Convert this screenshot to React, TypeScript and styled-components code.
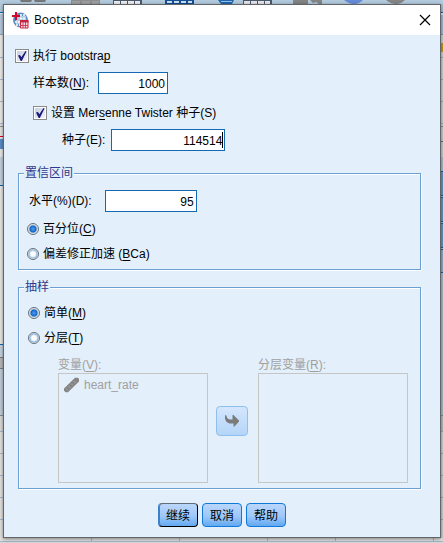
import React, { useState } from "react";
import styled, { createGlobalStyle } from "styled-components";

const uiFont = '"Liberation Sans", Arial, "Noto Sans CJK SC", sans-serif';

const GlobalStyle = createGlobalStyle`
  *, *::before, *::after { box-sizing: border-box; }
  body { margin: 0; background: #ecebe9; font: 12px/16px ${uiFont}; color: #000; }
  input, button { font: inherit; color: inherit; }
`;

/* ---------- window behind the dialog ---------- */

const Desktop = styled.div`
  display: grid;
  grid-template-columns: 3px minmax(0, 1fr) 2px;
  grid-template-rows: 4px auto 5px;
  min-height: 100vh;
  overflow: hidden;
`;

const Toolbar = styled.div`
  grid-column: 1 / -1;
  background: #b4cbdf;
  svg { display: block; }
`;

const Strip = styled.div`
  display: flex;
  flex-direction: column;
`;

const Segment = styled.div<{ $size: number; $fill: string; $line?: string }>`
  flex: none;
  height: ${(p) => p.$size}px;
  background: ${(p) => p.$fill};
  border-top: ${(p) => (p.$line ? `1px solid ${p.$line}` : "none")};
`;

const SheetRow = styled.div`
  grid-column: 1 / -1;
  display: flex;
  background: #e3e2e1;
  border-bottom: 1px solid #d8d8d8;
  box-shadow: inset 0 -1px 0 #a5b8cc;
`;

const SheetCell = styled.div<{ $width: number }>`
  flex: none;
  width: ${(p) => p.$width}px;
  border-right: 1px solid #a5b8cc;
`;

type Seg = [number, string, string?];

const leftSegments: Seg[] = [
  [8, "#b4cbdf"],
  [2, "#e6eef5", "#1262ab"],
  [20, "#b9cade"],
  [23, "#ecebe8", "#8fa5bd"],
  [22, "#ecebe8", "#a9bccf"],
  [22, "#ecebe8", "#a9bccf"],
  [22, "#ecebe8", "#a9bccf"],
  [3, "#e5e5e2", "#a9bccf"],
  [10, "#e5e5e2", "#8e8e8a"],
  [3, "#e4e8ee", "#d80027"],
  [10, "#5a8dc4"],
  [8, "#e9e9e7"],
  [28, "#c5d2df"],
  [159, "#e9e8e5", "#0e66b5"],
  [13, "#c7d5e2", "#0e66b5"],
  [11, "#b9b9ba", "#7d7d7d"],
  [47, "#c3cedb", "#7d7d7d"],
  [16, "#dddcda", "#8c8c8c"],
  [22, "#e3e2e0", "#a5b8cc"],
  [22, "#e3e2e0", "#a5b8cc"],
  [22, "#e3e2e0", "#a5b8cc"],
  [22, "#e3e2e0", "#a5b8cc"],
  [19, "#e3e2e0", "#a5b8cc"],
];

const rightSegments: Seg[] = [
  [8, "#a9bed2"],
  [3, "#dde5ec", "#1262ab"],
  [19, "#a8b8cf"],
  [9, "#cfcecd", "#8294aa"],
  [9, "#c39a1c"],
  [5, "#cfcecd"],
  [22, "#cfcecd", "#94a9c0"],
  [22, "#cfcecd", "#94a9c0"],
  [22, "#cfcecd", "#94a9c0"],
  [3, "#cfcecd", "#94a9c0"],
  [15, "#c9c9c8", "#888888"],
  [16, "#c9c9c8", "#6d6d6d"],
  [14, "#b0b9c8"],
  [24, "#6796c8", "#0e5ea8"],
  [2, "#b0b9c8", "#0e5ea8"],
  [24, "#6796c8", "#0e5ea8"],
  [2, "#b0b9c8", "#0e5ea8"],
  [24, "#6796c8", "#0e5ea8"],
  [2, "#b0b9c8", "#0e5ea8"],
  [23, "#91a9c8", "#0e5ea8"],
  [143, "#afb8c6", "#0e5ea8"],
  [16, "#bbbab9", "#888888"],
  [22, "#cfcecd", "#94a9c0"],
  [22, "#cfcecd", "#94a9c0"],
  [22, "#cfcecd", "#94a9c0"],
  [22, "#cfcecd", "#94a9c0"],
  [19, "#cfcecd", "#94a9c0"],
];

const Edge = ({ segments }: { segments: Seg[] }) => (
  <Strip aria-hidden="true">
    {segments.map(([size, fill, line], i) => (
      <Segment key={i} $size={size} $fill={fill} $line={line} />
    ))}
  </Strip>
);

const ToolbarIcons = () => (
  <svg width="443" height="4" viewBox="0 0 443 4" aria-hidden="true">
    <path d="M20 0h12l-1 2h-10zM34 0h12l-1 2h-10z" fill="#777" />
    <path d="M71 0h29v4H71z" fill="#8d8e90" />
    <path d="M72 1h8v3h-8zM82 1h8v3h-8zM92 1h7v3h-7z" fill="#a2a2a2" />
    <path d="M113 0h29v4h-29z" fill="#4b596d" />
    <path d="M114 1h6v3h-6zM121 1h6v3h-6zM128 1h6v3h-6zM135 1h5v3h-5z" fill="#f1f1f3" />
    <path d="M165 0h29v4h-29z" fill="#154e93" />
    <path d="M167 1h5v2h-5zM174 1h5v2h-5zM181 1h5v2h-5zM188 1h4v2h-4z" fill="#cfe3f7" />
    <path d="M218 0h16l-2 4h-11z" fill="#2465ab" />
    <path d="M221 1h11v1h-11z" fill="#8bc5f0" />
    <path d="M243 0h29v4h-29z" fill="#4b596d" />
    <path d="M244 1h6v3h-6zM251 1h6v3h-6zM258 1h6v3h-6zM265 1h5v3h-5z" fill="#e8e8ee" />
    <path d="M293 0h15v4h-15zM310 0h12v4h-3l-3-2-3 1z" fill="#858585" />
    <path d="M344 0h19q-4 4-9 4t-10-4z" fill="#668bd9" />
    <path d="M386 0h19q-4 4-9 4t-10-4z" fill="#858585" />
  </svg>
);

/* ---------- dialog ---------- */

const Dialog = styled.section`
  display: flex;
  flex-direction: column;
  background: #e3effb;
  border: 1px solid #5f6568;
  box-shadow: 0 1px 4px rgba(0, 0, 0, 0.45);
  z-index: 1;
`;

const TitleBar = styled.header`
  display: flex;
  align-items: center;
  gap: 5px;
  height: 30px;
  padding: 0 8px;
  background: #fff;
`;

const Title = styled.h1`
  flex: 1;
  margin: 0;
  font: 12px/16px "Open Sans", "Noto Sans", sans-serif;
`;

const CloseButton = styled.button`
  display: grid;
  place-items: center;
  width: 14px;
  height: 14px;
  padding: 0;
  border: 0;
  background: none;
`;

const Body = styled.form`
  display: flex;
  flex-direction: column;
  flex: 1;
  padding: 12px 19px 10px 11px;
`;

const Settings = styled.div`
  display: flex;
  flex-direction: column;
  align-items: flex-start;
  padding-bottom: 10px;
`;

const Row = styled.div<{ $indent?: number; $height?: number; $gap?: number }>`
  display: flex;
  align-items: center;
  gap: ${(p) => p.$gap ?? 9}px;
  height: ${(p) => p.$height ?? 22}px;
  margin-left: ${(p) => p.$indent ?? 0}px;
`;

const OptionLabel = styled.label`
  display: flex;
  align-items: center;
  gap: 4px;
  white-space: pre;
`;

const FieldLabel = styled.label`
  white-space: pre;
`;

const Key = styled.span`
  text-decoration: underline;
  text-underline-offset: 2px;
  text-decoration-thickness: 1px;
`;

const TickFrame = styled.span`
  display: grid;
  width: 14px;
  height: 14px;
  > * { grid-area: 1 / 1; }
  svg { pointer-events: none; }
`;

const Tick = styled.input`
  appearance: none;
  width: 14px;
  height: 14px;
  margin: 0;
  border: 1px solid #8b8b8b;
  background: linear-gradient(135deg, #c3cbdc, #f6f7fa);
  box-shadow: inset 0 0 0 1px #fff;
  &:not(:checked) + svg { visibility: hidden; }
`;

const Radio = styled.input`
  appearance: none;
  width: 12px;
  height: 12px;
  margin: 0;
  border: 1px solid #64707a;
  border-radius: 50%;
  background: radial-gradient(circle, #fff 0 2px, #dbeafa 3px, #8fb4d8 4px, #e8eef2 5px);
  &:checked {
    background: radial-gradient(circle, #4090e8 0 1px, #1264c4 3px, #b9cad8 4px, #eef1f2 5px);
  }
`;

const FieldBox = styled.span<{ $width: number; $caret?: boolean }>`
  position: relative;
  display: flex;
  width: ${(p) => p.$width}px;
  &::after {
    content: "";
    display: ${(p) => (p.$caret ? "block" : "none")};
    position: absolute;
    top: 3px;
    right: 2px;
    width: 1px;
    height: 16px;
    background: #000;
  }
`;

const Field = styled.input`
  width: 100%;
  height: 22px;
  padding: 2px 2px 0 2px;
  border: 1px solid #1768b3;
  border-radius: 0;
  outline: 0;
  background: #fff;
  text-align: right;
`;

const Group = styled.fieldset<{ $bottom: number }>`
  min-width: 0;
  margin: 0 0 9px 3px;
  padding: 3px 12px ${(p) => p.$bottom}px 5px;
  border: 1px solid #6ca0d2;
  box-shadow: 1px 1px 0 #fff, inset 1px 1px 0 #fff;
`;

const Legend = styled.legend`
  padding: 0 1px;
  background: #e3effb;
  color: #2d3a8f;
`;

const Transfer = styled.div`
  display: grid;
  grid-template-columns: minmax(0, 1fr) 34px minmax(0, 1fr);
  column-gap: 8px;
  margin-left: 34px;
  padding-top: 9px;
  color: #a0a0a0;
`;

const ListColumn = styled.div`
  display: flex;
  flex-direction: column;
`;

const List = styled.ul`
  height: 110px;
  margin: 0;
  padding: 2px 4px;
  border: 1px solid #c6c6c6;
  list-style: none;
`;

const ListItem = styled.li`
  display: flex;
  align-items: center;
  gap: 4px;
  height: 18px;
`;

const MoveButton = styled.button`
  align-self: end;
  display: grid;
  place-items: center;
  width: 32px;
  height: 30px;
  margin-bottom: 47px;
  padding: 0;
  border: 1px solid #8dc0ef;
  border-radius: 4px;
  background: linear-gradient(#d4e6fd, #b4d5f8);
`;

const Actions = styled.footer`
  display: flex;
  justify-content: center;
  gap: 4px;
  padding: 5px 0 0 8px;
`;

const ActionButton = styled.button<{ $primary?: boolean }>`
  width: 40px;
  height: 24px;
  padding: 2px 0 0;
  border: 1px solid #0f78d8;
  border-color: ${(p) => (p.$primary ? "#626c7b #000 #000 #3c7fc6" : "#0f78d8")};
  border-radius: 4px;
  background: linear-gradient(#bbd6fb, #9dc8fa 55%, #62a9f1);
  box-shadow: ${(p) => (p.$primary ? "inset 1px 0 0 #6c7684" : "none")};
  line-height: 20px;
`;

const AppIcon = () => (
  <svg width="17" height="17" viewBox="0 0 17 17" aria-hidden="true">
    <circle cx="8.5" cy="8" r="7.5" fill="#5f91c2" />
    <path d="M4 4h10v8H4z" fill="#b4cde4" />
    <path d="M8 3h5M8 6.500h6M3 10h5M4 13h4" stroke="#fff" strokeWidth="1.5" strokeDasharray="2 1" />
    <path d="M4 0v8M0 4h8" stroke="#d3072d" strokeWidth="2" />
    <path d="M8.500 8.500h7.500v7.500H8.500z" fill="#f7dde2" stroke="#c82442" />
    <path d="M8 8h8.500v2.500H8z" fill="#c82442" />
    <path d="M8 13.500h8M11 10v6M13.500 10v6" stroke="#cf3f5a" />
  </svg>
);

const CheckMark = () => (
  <svg width="14" height="14" viewBox="0 0 14 14" aria-hidden="true">
    <path d="M3 6.500l2-.5 1.300 2.300L10.500 2l1 .6L6.800 12H5.700z" fill="#17177f" />
  </svg>
);

const RulerIcon = () => (
  <svg width="17" height="16" viewBox="0 0 17 16" aria-hidden="true">
    <path d="M1 11.500L12 .8h3l1 1.200v2.500L5 15.200H2.500L1 13.500z" fill="#858585" />
    <path d="M3 11.500l2 2M5.500 9l2 2M8 6.500l2 2M10.500 4l2 2" stroke="#a9a9a9" strokeWidth="1" />
  </svg>
);

const ArrowIcon = () => (
  <svg width="16" height="14" viewBox="0 0 16 14" aria-hidden="true">
    <path d="M1 1.500l1-.5 1.500 3.500L6 5.500h2.500V1h1L15 6.500v1L10.500 12.500h-1V9.500H5.500L2.500 8 1 5z" fill="#7b7b7b" />
  </svg>
);

const CheckOption = ({ children }: { children: React.ReactNode }) => (
  <OptionLabel>
    <TickFrame>
      <Tick type="checkbox" defaultChecked />
      <CheckMark />
    </TickFrame>
    <span>{children}</span>
  </OptionLabel>
);

interface RadioProps {
  name: string;
  checked: boolean;
  onSelect: () => void;
  children: React.ReactNode;
}

const RadioOption = ({ name, checked, onSelect, children }: RadioProps) => (
  <OptionLabel>
    <Radio type="radio" name={name} checked={checked} onChange={onSelect} />
    <span>{children}</span>
  </OptionLabel>
);

export default function App() {
  const [interval, setInterval] = useState("percentile");
  const [sampling, setSampling] = useState("simple");

  return (
    <>
      <GlobalStyle />
      <Desktop>
        <Toolbar>
          <ToolbarIcons />
        </Toolbar>
        <Edge segments={leftSegments} />
        <Dialog role="dialog" aria-labelledby="dialog-title">
          <TitleBar>
            <AppIcon />
            <Title id="dialog-title">Bootstrap</Title>
            <CloseButton type="button" aria-label="关闭">
              <svg width="12" height="12" viewBox="0 0 12 12" aria-hidden="true">
                <path d="M1 1l10 10M11 1L1 11" stroke="#000" strokeWidth="1.2" />
              </svg>
            </CloseButton>
          </TitleBar>
          <Body onSubmit={(e) => e.preventDefault()}>
            <Settings>
              <Row $height={18}>
                <CheckOption>
                  执行 bootstra<Key>p</Key>
                </CheckOption>
              </Row>
              <Row $height={36} $indent={18}>
                <FieldLabel htmlFor="samples">
                  样本数(<Key>N</Key>):
                </FieldLabel>
                <FieldBox $width={70}>
                  <Field id="samples" defaultValue="1000" />
                </FieldBox>
              </Row>
              <Row $height={24} $indent={18}>
                <CheckOption>
                  设置 Mer<Key>s</Key>enne Twister 种子(S)
                </CheckOption>
              </Row>
              <Row $height={30} $indent={47} $gap={6}>
                <FieldLabel htmlFor="seed">种子(E):</FieldLabel>
                <FieldBox $width={114} $caret>
                  <Field id="seed" defaultValue="114514" />
                </FieldBox>
              </Row>
            </Settings>

            <Group $bottom={1}>
              <Legend>置信区间</Legend>
              <Row $height={34} $indent={5} $gap={13}>
                <FieldLabel htmlFor="level">水平(%)(D):</FieldLabel>
                <FieldBox $width={92}>
                  <Field id="level" defaultValue="95" />
                </FieldBox>
              </Row>
              <Row $height={22} $indent={3}>
                <RadioOption
                  name="interval"
                  checked={interval === "percentile"}
                  onSelect={() => setInterval("percentile")}
                >
                  百分位(<Key>C</Key>)
                </RadioOption>
              </Row>
              <Row $height={28} $indent={3}>
                <RadioOption
                  name="interval"
                  checked={interval === "bca"}
                  onSelect={() => setInterval("bca")}
                >
                  偏差修正加速 (<Key>B</Key>Ca)
                </RadioOption>
              </Row>
            </Group>

            <Group $bottom={5}>
              <Legend>抽样</Legend>
              <Row $height={30} $indent={4}>
                <RadioOption
                  name="sampling"
                  checked={sampling === "simple"}
                  onSelect={() => setSampling("simple")}
                >
                  简单(<Key>M</Key>)
                </RadioOption>
              </Row>
              <Row $height={20} $indent={4}>
                <RadioOption
                  name="sampling"
                  checked={sampling === "stratified"}
                  onSelect={() => setSampling("stratified")}
                >
                  分层(<Key>T</Key>)
                </RadioOption>
              </Row>
              <Transfer>
                <ListColumn>
                  <span id="variables">
                    变量(<Key>V</Key>):
                  </span>
                  <List role="listbox" aria-labelledby="variables" aria-disabled="true">
                    <ListItem role="option" aria-selected="false">
                      <RulerIcon />
                      heart_rate
                    </ListItem>
                  </List>
                </ListColumn>
                <MoveButton type="button" disabled aria-label="移动变量">
                  <ArrowIcon />
                </MoveButton>
                <ListColumn>
                  <span id="strata">
                    分层变量(<Key>R</Key>):
                  </span>
                  <List role="listbox" aria-labelledby="strata" aria-disabled="true" />
                </ListColumn>
              </Transfer>
            </Group>

            <Actions>
              <ActionButton type="submit" $primary>
                继续
              </ActionButton>
              <ActionButton type="button">取消</ActionButton>
              <ActionButton type="button">帮助</ActionButton>
            </Actions>
          </Body>
        </Dialog>
        <Edge segments={rightSegments} />
        <SheetRow aria-hidden="true">
          <SheetCell $width={92} />
          <SheetCell $width={88} />
          <SheetCell $width={88} />
          <SheetCell $width={68} />
          <SheetCell $width={98} />
        </SheetRow>
      </Desktop>
    </>
  );
}
